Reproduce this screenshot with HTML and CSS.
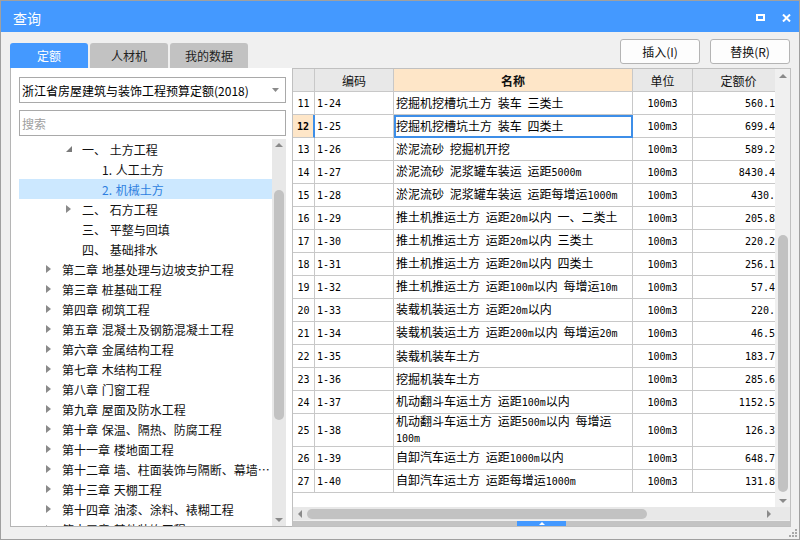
FILE: index.html
```html
<!DOCTYPE html>
<html lang="zh-CN">
<head>
<meta charset="utf-8">
<title>查询</title>
<link rel="stylesheet" href="styles.css">
</head>
<body>
<div class="win">
  <div class="titlebar">
    <div class="title">查询</div>
    <div class="winbtn max"><svg width="9" height="7" viewBox="0 0 9 7"><rect x="1" y="1" width="7" height="5" fill="none" stroke="#fff" stroke-width="2"/></svg></div>
    <div class="winbtn close"><svg width="9" height="8" viewBox="0 0 9 8"><path d="M1 0.5L8 7.5M8 0.5L1 7.5" stroke="#fff" stroke-width="2"/></svg></div>
  </div>

  <div class="toolbar">
    <div class="tabs">
      <div class="tab active">定额</div>
      <div class="tab">人材机</div>
      <div class="tab">我的数据</div>
    </div>
    <div class="actions">
      <div class="btn">插入(I)</div>
      <div class="btn">替换(R)</div>
    </div>
  </div>

  <div class="content">
    <div class="lpanel">
      <div class="select">
        <span class="seltxt">浙江省房屋建筑与装饰工程预算定额(2018)</span>
        <svg class="caret" width="7" height="4" viewBox="0 0 7 4"><path d="M0 0H7L3.5 4Z" fill="#8a8a8a"/></svg>
      </div>
      <div class="search">搜索</div>
      <div class="tree">
        <div class="tree-list">
          <div class="tree-row l2"><span class="arr"><svg width="6" height="6" viewBox="0 0 6 6"><path d="M6 0V6H0Z" fill="#7a7a7a"/></svg></span><span class="lbl">一、 土方工程</span></div>
          <div class="tree-row l3"><span class="arr"></span><span class="lbl">1. 人工土方</span></div>
          <div class="tree-row l3 sel"><span class="arr"></span><span class="lbl">2. 机械土方</span></div>
          <div class="tree-row l2"><span class="arr"><svg width="5" height="8" viewBox="0 0 5 8"><path d="M0 0L5 4L0 8Z" fill="#8a8a8a"/></svg></span><span class="lbl">二、 石方工程</span></div>
          <div class="tree-row l2"><span class="arr"></span><span class="lbl">三、 平整与回填</span></div>
          <div class="tree-row l2"><span class="arr"></span><span class="lbl">四、 基础排水</span></div>
          <div class="tree-row l1"><span class="arr"><svg width="5" height="8" viewBox="0 0 5 8"><path d="M0 0L5 4L0 8Z" fill="#8a8a8a"/></svg></span><span class="lbl">第二章 地基处理与边坡支护工程</span></div>
          <div class="tree-row l1"><span class="arr"><svg width="5" height="8" viewBox="0 0 5 8"><path d="M0 0L5 4L0 8Z" fill="#8a8a8a"/></svg></span><span class="lbl">第三章 桩基础工程</span></div>
          <div class="tree-row l1"><span class="arr"><svg width="5" height="8" viewBox="0 0 5 8"><path d="M0 0L5 4L0 8Z" fill="#8a8a8a"/></svg></span><span class="lbl">第四章 砌筑工程</span></div>
          <div class="tree-row l1"><span class="arr"><svg width="5" height="8" viewBox="0 0 5 8"><path d="M0 0L5 4L0 8Z" fill="#8a8a8a"/></svg></span><span class="lbl">第五章 混凝土及钢筋混凝土工程</span></div>
          <div class="tree-row l1"><span class="arr"><svg width="5" height="8" viewBox="0 0 5 8"><path d="M0 0L5 4L0 8Z" fill="#8a8a8a"/></svg></span><span class="lbl">第六章 金属结构工程</span></div>
          <div class="tree-row l1"><span class="arr"><svg width="5" height="8" viewBox="0 0 5 8"><path d="M0 0L5 4L0 8Z" fill="#8a8a8a"/></svg></span><span class="lbl">第七章 木结构工程</span></div>
          <div class="tree-row l1"><span class="arr"><svg width="5" height="8" viewBox="0 0 5 8"><path d="M0 0L5 4L0 8Z" fill="#8a8a8a"/></svg></span><span class="lbl">第八章 门窗工程</span></div>
          <div class="tree-row l1"><span class="arr"><svg width="5" height="8" viewBox="0 0 5 8"><path d="M0 0L5 4L0 8Z" fill="#8a8a8a"/></svg></span><span class="lbl">第九章 屋面及防水工程</span></div>
          <div class="tree-row l1"><span class="arr"><svg width="5" height="8" viewBox="0 0 5 8"><path d="M0 0L5 4L0 8Z" fill="#8a8a8a"/></svg></span><span class="lbl">第十章 保温、隔热、防腐工程</span></div>
          <div class="tree-row l1"><span class="arr"><svg width="5" height="8" viewBox="0 0 5 8"><path d="M0 0L5 4L0 8Z" fill="#8a8a8a"/></svg></span><span class="lbl">第十一章 楼地面工程</span></div>
          <div class="tree-row l1"><span class="arr"><svg width="5" height="8" viewBox="0 0 5 8"><path d="M0 0L5 4L0 8Z" fill="#8a8a8a"/></svg></span><span class="lbl">第十二章 墙、柱面装饰与隔断、幕墙工程</span></div>
          <div class="tree-row l1"><span class="arr"><svg width="5" height="8" viewBox="0 0 5 8"><path d="M0 0L5 4L0 8Z" fill="#8a8a8a"/></svg></span><span class="lbl">第十三章 天棚工程</span></div>
          <div class="tree-row l1"><span class="arr"><svg width="5" height="8" viewBox="0 0 5 8"><path d="M0 0L5 4L0 8Z" fill="#8a8a8a"/></svg></span><span class="lbl">第十四章 油漆、涂料、裱糊工程</span></div>
          <div class="tree-row l1"><span class="arr"><svg width="5" height="8" viewBox="0 0 5 8"><path d="M0 0L5 4L0 8Z" fill="#8a8a8a"/></svg></span><span class="lbl">第十五章 其他装饰工程</span></div>
        </div>
        <div class="tree-sb">
          <div class="sb-btn"><svg width="8" height="4" viewBox="0 0 8 4"><path d="M0 4L4 0L8 4Z" fill="#8a8a8a"/></svg></div>
          <div class="tree-thumb"></div>
          <div class="sb-btn end"><svg width="8" height="4" viewBox="0 0 8 4"><path d="M0 0H8L4 4Z" fill="#8a8a8a"/></svg></div>
        </div>
      </div>
    </div>

    <div class="rpanel">
      <div class="grid">
        <div class="viewport">
          <table class="data">
            <thead>
              <tr><th class="c-no"></th><th class="c-code">编码</th><th class="c-name">名称</th><th class="c-unit">单位</th><th class="c-price">定额价</th></tr>
            </thead>
            <tbody>
              <tr><td class="no">11</td><td class="code">1-24</td><td class="nm">挖掘机挖槽坑土方 装车 三类土</td><td class="unit">100m3</td><td class="price">560.16</td></tr>
              <tr class="cur"><td class="no">12</td><td class="code">1-25</td><td class="nm">挖掘机挖槽坑土方 装车 四类土</td><td class="unit">100m3</td><td class="price">699.42</td></tr>
              <tr><td class="no">13</td><td class="code">1-26</td><td class="nm">淤泥流砂 挖掘机开挖</td><td class="unit">100m3</td><td class="price">589.24</td></tr>
              <tr><td class="no">14</td><td class="code">1-27</td><td class="nm">淤泥流砂 泥浆罐车装运 运距<span class="a">5000m</span></td><td class="unit">100m3</td><td class="price">8430.45</td></tr>
              <tr><td class="no">15</td><td class="code">1-28</td><td class="nm">淤泥流砂 泥浆罐车装运 运距每增运<span class="a">1000m</span></td><td class="unit">100m3</td><td class="price">430.5</td></tr>
              <tr><td class="no">16</td><td class="code">1-29</td><td class="nm">推土机推运土方 运距<span class="a">20m</span>以内 一、二类土</td><td class="unit">100m3</td><td class="price">205.81</td></tr>
              <tr><td class="no">17</td><td class="code">1-30</td><td class="nm">推土机推运土方 运距<span class="a">20m</span>以内 三类土</td><td class="unit">100m3</td><td class="price">220.27</td></tr>
              <tr><td class="no">18</td><td class="code">1-31</td><td class="nm">推土机推运土方 运距<span class="a">20m</span>以内 四类土</td><td class="unit">100m3</td><td class="price">256.13</td></tr>
              <tr><td class="no">19</td><td class="code">1-32</td><td class="nm">推土机推运土方 运距<span class="a">100m</span>以内 每增运<span class="a">10m</span></td><td class="unit">100m3</td><td class="price">57.48</td></tr>
              <tr><td class="no">20</td><td class="code">1-33</td><td class="nm">装载机装运土方 运距<span class="a">20m</span>以内</td><td class="unit">100m3</td><td class="price">220.3</td></tr>
              <tr><td class="no">21</td><td class="code">1-34</td><td class="nm">装载机装运土方 运距<span class="a">200m</span>以内 每增运<span class="a">20m</span></td><td class="unit">100m3</td><td class="price">46.56</td></tr>
              <tr><td class="no">22</td><td class="code">1-35</td><td class="nm">装载机装车土方</td><td class="unit">100m3</td><td class="price">183.72</td></tr>
              <tr><td class="no">23</td><td class="code">1-36</td><td class="nm">挖掘机装车土方</td><td class="unit">100m3</td><td class="price">285.64</td></tr>
              <tr><td class="no">24</td><td class="code">1-37</td><td class="nm">机动翻斗车运土方 运距<span class="a">100m</span>以内</td><td class="unit">100m3</td><td class="price">1152.53</td></tr>
              <tr class="tall"><td class="no">25</td><td class="code">1-38</td><td class="nm">机动翻斗车运土方 运距<span class="a">500m</span>以内 每增运<span class="a">100m</span></td><td class="unit">100m3</td><td class="price">126.35</td></tr>
              <tr><td class="no">26</td><td class="code">1-39</td><td class="nm">自卸汽车运土方 运距<span class="a">1000m</span>以内</td><td class="unit">100m3</td><td class="price">648.71</td></tr>
              <tr><td class="no">27</td><td class="code">1-40</td><td class="nm">自卸汽车运土方 运距每增运<span class="a">1000m</span></td><td class="unit">100m3</td><td class="price">131.84</td></tr>
            </tbody>
          </table>
        </div>
        <div class="vsb">
          <div class="sb-btn v"><svg width="8" height="4" viewBox="0 0 8 4"><path d="M0 4L4 0L8 4Z" fill="#8a8a8a"/></svg></div>
          <div class="vthumb"></div>
          <div class="sb-btn v end"><svg width="8" height="4" viewBox="0 0 8 4"><path d="M0 0H8L4 4Z" fill="#8a8a8a"/></svg></div>
        </div>
      </div>
      <div class="hrow">
        <div class="hsb">
          <div class="hbtn"><svg width="4" height="8" viewBox="0 0 4 8"><path d="M4 0V8L0 4Z" fill="#8a8a8a"/></svg></div>
          <div class="hthumb"></div>
          <div class="hbtn end"><svg width="4" height="8" viewBox="0 0 4 8"><path d="M0 0V8L4 4Z" fill="#8a8a8a"/></svg></div>
        </div>
        <div class="corner"></div>
      </div>
      <div class="gap1"></div>
      <div class="split">
        <div class="handle"><svg width="6" height="3" viewBox="0 0 6 3"><path d="M0 3L3 0L6 3Z" fill="#fff"/></svg></div>
      </div>
    </div>
  </div>
  <div class="bottom"></div>
  <svg class="grip" width="8" height="8" viewBox="0 0 8 8">
    <rect x="6" y="0" width="2" height="2" fill="#a8a8a8"/>
    <rect x="3" y="3" width="2" height="2" fill="#a8a8a8"/>
    <rect x="6" y="3" width="2" height="2" fill="#a8a8a8"/>
    <rect x="0" y="6" width="2" height="2" fill="#a8a8a8"/>
    <rect x="3" y="6" width="2" height="2" fill="#a8a8a8"/>
    <rect x="6" y="6" width="2" height="2" fill="#a8a8a8"/>
  </svg>
</div>
</body>
</html>
```

FILE: styles.css
```css
* { box-sizing: border-box; }
html, body { margin: 0; padding: 0; }
body {
  font-family: "Noto Sans CJK SC", "Noto Sans", sans-serif;
  font-size: 12px;
  color: #000;
  background: #f0f0f0;
}
.win {
  width: 800px;
  height: 540px;
  border: 1px solid #a0a0a0;
  background: #f0f0f0;
  display: flex;
  flex-direction: column;
  position: relative;
}

/* title bar */
.titlebar {
  height: 31px;
  flex: none;
  background: #4499ff;
  color: #fff;
  display: flex;
  align-items: center;
  padding: 2px 0 0 12px;
}
.title { flex: 1; font-size: 14px; }
.winbtn {
  width: 26px;
  height: 20px;
  display: flex;
  align-items: center;
  justify-content: center;
}
.winbtn svg { display: block; }

/* toolbar */
.toolbar {
  height: 36px;
  flex: none;
  display: flex;
  padding: 0 9px 0 9px;
}
.tabs { display: flex; gap: 2px; align-self: flex-end; }
.tab {
  width: 78px;
  height: 25px;
  background: #c2c2c2;
  border-radius: 3px 3px 0 0;
  display: flex;
  align-items: center;
  justify-content: center;
  color: #222;
}
.tab.active { background: #4499ff; color: #fff; }
.actions {
  margin-left: auto;
  display: flex;
  gap: 10px;
  padding-top: 7px;
}
.btn {
  width: 80px;
  height: 25px;
  border: 1px solid #b4b4b4;
  border-radius: 3px;
  background: #fdfdfd;
  display: flex;
  align-items: center;
  justify-content: center;
  color: #111;
}

/* content */
.content {
  height: 459px;
  flex: none;
  display: flex;
  padding: 0 8px 0 9px;
}
.bottom { flex: 1; }

/* left panel */
.lpanel {
  width: 282px;
  flex: none;
  background: #fff;
  border-left: 1px solid #b5b5b5;
  border-bottom: 1px solid #b5b5b5;
  padding: 9px 6px 0 8px;
  display: flex;
  flex-direction: column;
}
.select {
  height: 26px;
  flex: none;
  border: 1px solid #a9a9a9;
  display: flex;
  align-items: center;
  padding-left: 2px;
}
.seltxt { flex: 1; white-space: nowrap; overflow: hidden; }
.caret { display: block; margin-right: 6px; }
.search {
  height: 26px;
  flex: none;
  margin-top: 7px;
  border: 1px solid #a9a9a9;
  padding-left: 2px;
  color: #a0a0a0;
  display: flex;
  align-items: center;
}
.tree {
  flex: 1;
  min-height: 0;
  margin-top: 3px;
  display: flex;
}
.tree-list {
  flex: 1;
  min-width: 0;
  overflow: hidden;
  word-spacing: 1px;
}
.tree-row {
  height: 20px;
  display: flex;
  align-items: center;
  white-space: nowrap;
  color: #111;
}
.tree-row.l1 { padding-left: 27px; }
.tree-row.l2 { padding-left: 47px; }
.tree-row.l3 { padding-left: 67px; }
.tree-row.sel { background: #cce8ff; color: #2e7fe0; }
.arr {
  width: 16px;
  flex: none;
  display: flex;
  align-items: center;
}
.arr svg { display: block; }
.lbl {
  flex: 1;
  min-width: 0;
  overflow: hidden;
  text-overflow: ellipsis;
}
.tree-sb {
  width: 14px;
  flex: none;
  background: #e8e8e8;
  display: flex;
  flex-direction: column;
  align-items: center;
}
.sb-btn {
  height: 12px;
  width: 100%;
  flex: none;
  display: flex;
  align-items: center;
  justify-content: center;
}
.sb-btn svg { display: block; }
.sb-btn.end { margin-top: auto; }
.tree-thumb {
  width: 10px;
  height: 230px;
  margin-top: 39px;
  border-radius: 5px;
  background: #c2c2c2;
}

/* right panel */
.rpanel {
  width: 499px;
  flex: none;
  border: 1px solid #c0c0c0;
  background: #fff;
  display: flex;
  flex-direction: column;
}
.grid {
  flex: 1;
  min-height: 0;
  display: flex;
}
.viewport {
  flex: 1;
  min-width: 0;
  overflow: hidden;
  background: #fff;
}
.vsb {
  width: 15px;
  flex: none;
  background: #f0f0f0;
  display: flex;
  flex-direction: column;
  align-items: center;
}
.sb-btn.v { height: 13px; }
.vthumb {
  width: 10px;
  height: 257px;
  margin-top: 153px;
  border-radius: 5px;
  background: #c2c2c2;
}
.hrow { height: 13px; flex: none; display: flex; }
.hsb {
  flex: 1;
  background: #e8e8e8;
  display: flex;
  align-items: center;
}
.hbtn {
  width: 13px;
  height: 13px;
  flex: none;
  display: flex;
  align-items: center;
  justify-content: center;
}
.hbtn svg { display: block; }
.hbtn.end { margin-left: auto; }
.hthumb {
  width: 340px;
  height: 10px;
  margin-left: 1px;
  border-radius: 5px;
  background: #c2c2c2;
}
.corner { width: 15px; flex: none; background: #e8e8e8; }
.gap1 { height: 1px; flex: none; background: #f0f0f0; }
.split {
  height: 5px;
  flex: none;
  background: #c4c4c4;
  display: flex;
  justify-content: center;
}
.handle {
  width: 49px;
  background: #4499ff;
  display: flex;
  align-items: center;
  justify-content: center;
}
.handle svg { display: block; }

/* data table */
table.data {
  border-collapse: separate;
  border-spacing: 0;
  table-layout: fixed;
  width: 492px;
}
.data th, .data td {
  border-right: 1px solid #c8c8c8;
  border-bottom: 1px solid #c8c8c8;
  padding: 0 2px;
  overflow: hidden;
  white-space: nowrap;
  vertical-align: middle;
}
.data tr { height: 23px; }
.data tr.tall { height: 33px; }
.data th {
  background: #e8e8e8;
  font-weight: normal;
  text-align: center;
  color: #111;
}
.data th.c-no { width: 22px; }
.data th.c-code { width: 79px; }
.data th.c-name { width: 239px; background: #fee6c8; font-weight: bold; }
.data th.c-unit { width: 60px; }
.data th.c-price { width: 92px; }
.data td.no, .data td.code, .data td.unit, .data td.price, .data .a {
  font-family: "DejaVu Sans Mono", "Liberation Mono", monospace;
  font-size: 10px;
}
.data td.no { text-align: center; padding: 0; }
.data td.nm {
  white-space: normal;
  line-height: 14px;
  word-spacing: 3px;
}
.data td.unit { text-align: center; }
.data td.price { text-align: right; padding-right: 3px; }
.data tr.cur td.no {
  background: #fee6c8;
  font-weight: bold;
  border-right: 2px solid #3d8ee8;
}
.data tr.cur td.nm {
  outline: 2px solid #3d8ee8;
  outline-offset: -2px;
}

.grip { position: absolute; right: 2px; bottom: 2px; display: block; }
```
